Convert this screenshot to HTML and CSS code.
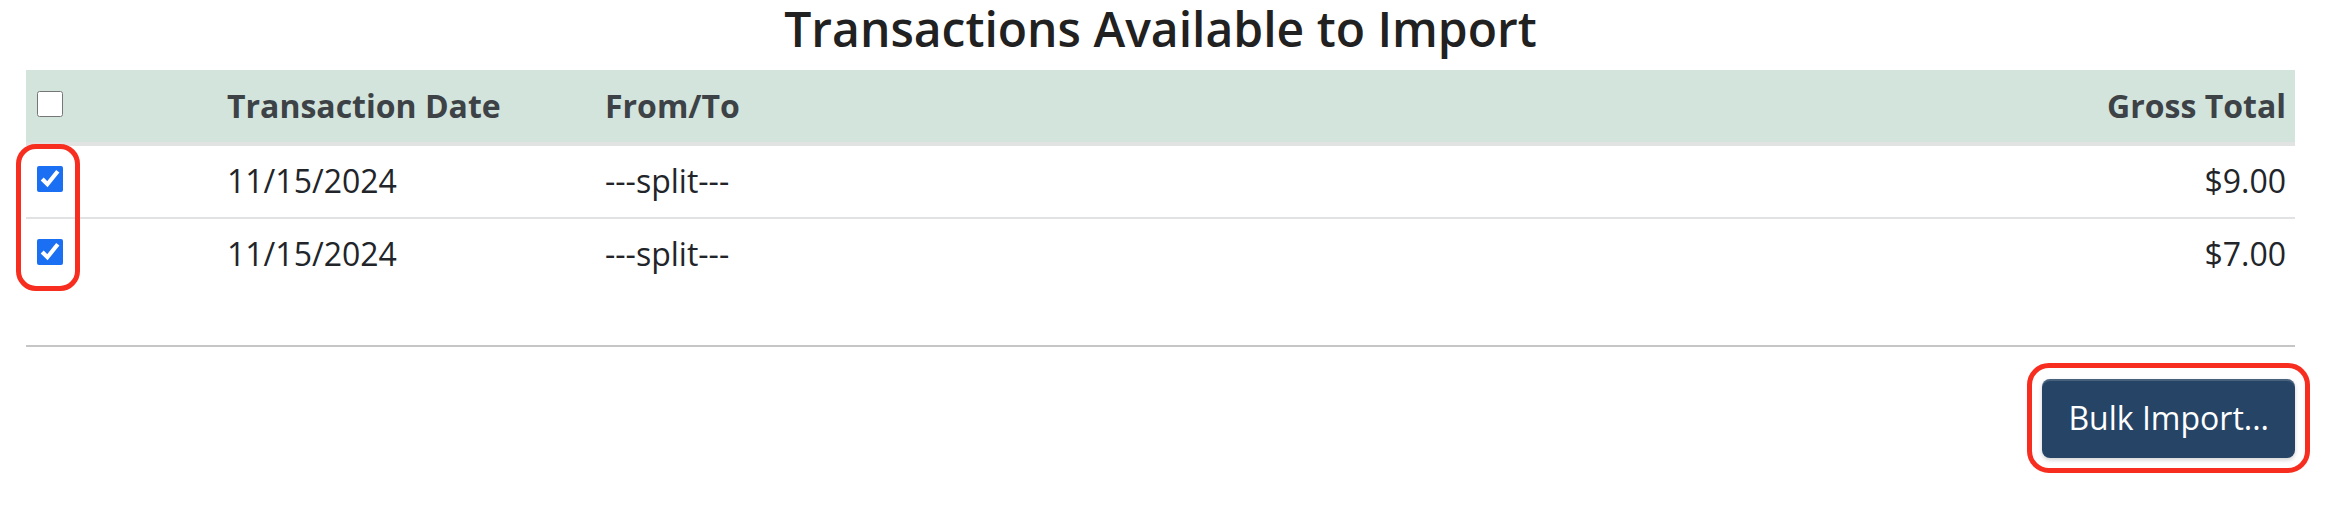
FILE: index.html
```html
<html>
<head>
<title>Transactions Available to Import</title>
<meta charset="utf-8">
<link rel="stylesheet" href="styles.css">
</head>
<body>
  <div class="page">
    <h1 class="title">Transactions Available to Import</h1>
    <div class="table-wrap">
      <table class="tx-table">
        <colgroup>
          <col class="col-check">
          <col class="col-date">
          <col>
          <col class="col-total">
        </colgroup>
        <thead>
          <tr>
            <th><input type="checkbox" class="cb"></th>
            <th>Transaction Date</th>
            <th>From/To</th>
            <th class="num">Gross Total</th>
          </tr>
        </thead>
        <tbody>
          <tr>
            <td><input type="checkbox" class="cb" checked></td>
            <td>11/15/2024</td>
            <td>---split---</td>
            <td class="num">$9.00</td>
          </tr>
          <tr>
            <td><input type="checkbox" class="cb" checked></td>
            <td>11/15/2024</td>
            <td>---split---</td>
            <td class="num">$7.00</td>
          </tr>
        </tbody>
      </table>
      <!-- annotation round the row checkboxes -->
      <div class="mark-rows"></div>
    </div>
    <hr class="rule">
    <div class="actions">
      <span class="mark-btn">
        <button class="btn-primary">Bulk Import...</button>
      </span>
    </div>
  </div>
</body>
</html>
```

FILE: styles.css
```css
html,body { margin: 0; padding: 0; font-family: "Open Sans", sans-serif; background: #fff; color: #212529; }
.page { padding: 0 31px 0 26px; }
.title { margin: 0 0 12px; font-size: 48px; line-height: 1.2; font-weight: 600; text-align: center; color: #212121; }
.table-wrap { position: relative; }
.tx-table { width: 100%; border-collapse: collapse; table-layout: fixed; font-size: 32px; line-height: 48px; }
.col-check { width: 192px; }
.col-date { width: 378px; }
.col-total { width: 400px; }
.tx-table th { background: #d3e4dc; color: #3d4247; font-weight: 700; text-align: left; padding: 12px 9px; border-bottom: 4px solid #e1e3e3; }
.tx-table td { padding: 11.5px 9px; }
.tx-table tbody tr + tr td { border-top: 2px solid #e0e2e4; }
.tx-table th, .tx-table td { vertical-align: middle; }
.tx-table .num { text-align: right; }
.cb { width: 26px; height: 26px; margin: 0 0 0 2px; vertical-align: middle; accent-color: #1b6ff3; position: relative; top: -2px; }
.mark-rows { position: absolute; left: -10px; top: 74px; width: 64px; height: 147px; box-sizing: border-box; border: 5px solid #f72d1f; border-radius: 20px; }
.rule { margin: 55px 0 32px; border: 0; border-top: 2px solid #c6c6c6; height: 0; }
.actions { display: flex; justify-content: flex-end; }
.mark-btn { position: relative; display: inline-block; }
.mark-btn::after { content: ""; position: absolute; top: -16px; right: -15px; bottom: -15px; left: -15px; border: 5px solid #f72d1f; border-radius: 22px; pointer-events: none; }
.btn-primary { display: block; font-family: "Open Sans", sans-serif; font-size: 32px; line-height: 48px; color: #fff; background: #264466; border: 0; border-radius: 8px; padding: 15.5px 26px; box-shadow: inset 0 2px 0 rgba(255,255,255,.16), 0 2px 4px rgba(0,0,0,.18); cursor: pointer; }
```
